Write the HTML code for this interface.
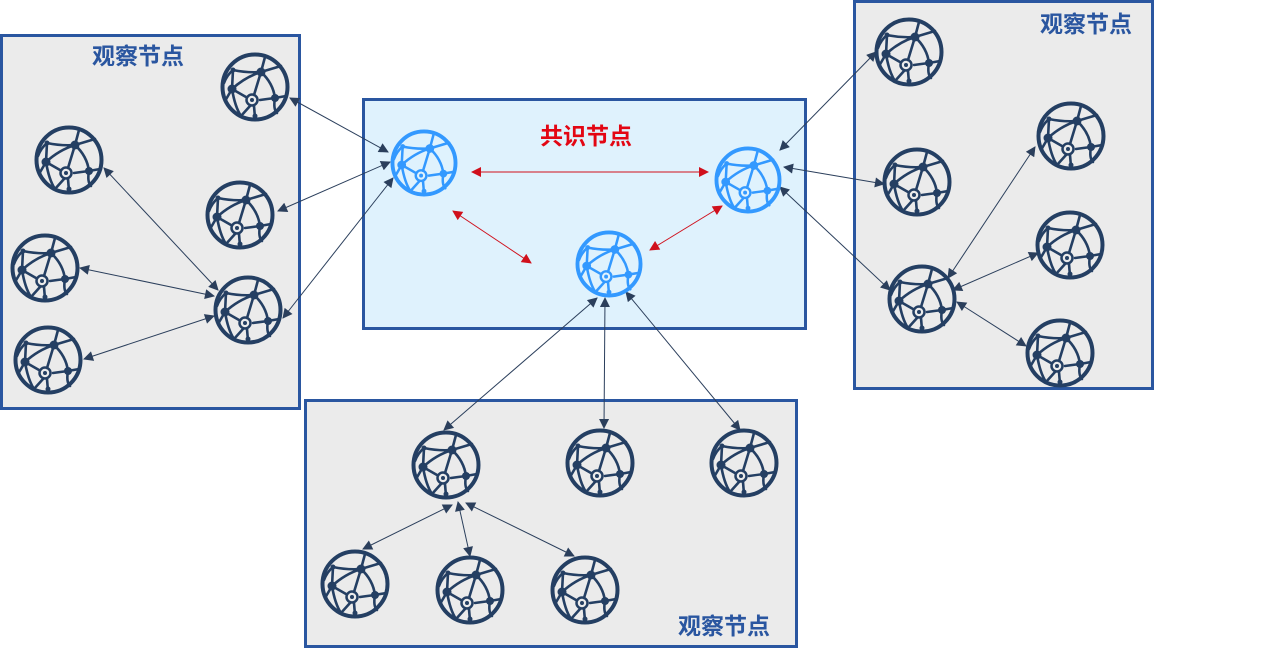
<!DOCTYPE html>
<html><head><meta charset="utf-8"><style>
body{margin:0;background:#fff;width:1284px;height:653px;overflow:hidden}
svg{display:block}
text{font-family:"Liberation Sans","Noto Sans CJK SC",sans-serif;font-weight:bold;font-size:23px}
</style></head><body>
<svg width="1284" height="653" viewBox="0 0 1284 653">
<defs>
<g id="g">
<circle r="32.5" fill="none" stroke-width="4"/>
<g fill="none" stroke-width="2.6" stroke-linecap="round">
<path d="M-22,-17 L-23,2 L-30,14"/>
<path d="M-22,-17 Q-8,-14 6,-15 L26,-21"/>
<path d="M6,-15 L10,-30"/>
<path d="M-23,2 Q-10,-10 6,-15"/>
<path d="M-23,2 L-9,10"/>
<path d="M6,-15 L-1,8"/>
<path d="M-31,-4 Q-28,-12 -22,-17"/>
<path d="M6,-15 Q18,-4 20,11"/>
<path d="M20,11 L31,9"/>
<path d="M20,11 Q18,22 22,26"/>
<path d="M-5,19 L-14,29"/>
<path d="M-1,19 L0,31"/>
<path d="M5,13 Q12,12 20,11"/>
<path d="M-23,2 Q-20,20 -14,29"/>
</g>
<circle cx="-3" cy="13" r="5.5" fill="none" stroke-width="2.5"/>
<circle cx="-3" cy="13" r="2" stroke="none"/>
<circle cx="-23" cy="2" r="4.5" stroke="none"/>
<circle cx="6" cy="-15" r="4.5" stroke="none"/>
<circle cx="20" cy="11" r="4" stroke="none"/>
<circle cx="-22" cy="-17" r="2.5" stroke="none"/>
<circle cx="0" cy="29" r="2.5" stroke="none"/>
</g>
<marker id="ad" viewBox="0 0 10 10" refX="9" refY="5" markerWidth="12" markerHeight="10" markerUnits="userSpaceOnUse" orient="auto-start-reverse"><path d="M0,0L10,5L0,10z" fill="#2b3f5c"/></marker>
<marker id="ar" viewBox="0 0 10 10" refX="9" refY="5" markerWidth="12" markerHeight="10" markerUnits="userSpaceOnUse" orient="auto-start-reverse"><path d="M0,0L10,5L0,10z" fill="#d0101c"/></marker>
</defs>
<g stroke="#2a56a0" stroke-width="3">
<rect x="1.5" y="35.5" width="298" height="373" fill="#ebebeb"/>
<rect x="363.5" y="99.5" width="442" height="229" fill="#dff2fd"/>
<rect x="854.5" y="1.5" width="298" height="387" fill="#ebebeb"/>
<rect x="305.5" y="400.5" width="491" height="246" fill="#ebebeb"/>
</g>
<text x="92" y="64" fill="#2a56a0">观察节点</text>
<text x="1040" y="32" fill="#2a56a0">观察节点</text>
<text x="678" y="634" fill="#2a56a0">观察节点</text>
<text x="540" y="144" fill="#e30613">共识节点</text>
<g stroke="#2b3f5c" stroke-width="1" marker-start="url(#ad)" marker-end="url(#ad)">
<line x1="290" y1="98" x2="388" y2="152"/>
<line x1="278" y1="211" x2="390" y2="162"/>
<line x1="283" y1="318" x2="393" y2="178"/>
<line x1="104" y1="168" x2="218" y2="290"/>
<line x1="80" y1="268" x2="214" y2="296"/>
<line x1="84" y1="359" x2="214" y2="316"/>
<line x1="876" y1="52" x2="780" y2="150"/>
<line x1="784" y1="167" x2="884" y2="184"/>
<line x1="780" y1="187" x2="890" y2="290"/>
<line x1="948" y1="278" x2="1035" y2="147"/>
<line x1="953" y1="290" x2="1038" y2="253"/>
<line x1="957" y1="302" x2="1026" y2="346"/>
<line x1="597" y1="298" x2="444" y2="430"/>
<line x1="605" y1="298" x2="604" y2="428"/>
<line x1="626" y1="292" x2="740" y2="430"/>
<line x1="452" y1="505" x2="363" y2="549"/>
<line x1="458" y1="502" x2="470" y2="556"/>
<line x1="466" y1="503" x2="574" y2="556"/>
</g>
<g stroke="#d0101c" stroke-width="1" marker-start="url(#ar)" marker-end="url(#ar)">
<line x1="472" y1="172" x2="708" y2="172"/>
<line x1="453" y1="211" x2="531" y2="263"/>
<line x1="650" y1="250" x2="722" y2="206"/>
</g>
<g stroke="#243f63" fill="#243f63">
<use href="#g" x="255" y="87"/><use href="#g" x="69" y="160"/><use href="#g" x="240" y="215"/>
<use href="#g" x="45" y="268"/><use href="#g" x="248" y="310"/><use href="#g" x="48" y="360"/>
<use href="#g" x="909" y="52"/><use href="#g" x="1071" y="136"/><use href="#g" x="917" y="182"/>
<use href="#g" x="1070" y="245"/><use href="#g" x="922" y="299"/><use href="#g" x="1060" y="353"/>
<use href="#g" x="446" y="465"/><use href="#g" x="600" y="463"/><use href="#g" x="744" y="463"/>
<use href="#g" x="355" y="584"/><use href="#g" x="470" y="590"/><use href="#g" x="585" y="590"/>
</g>
<g stroke="#3399ff" fill="#3399ff">
<use href="#g" transform="translate(424,163) scale(0.97)"/>
<use href="#g" transform="translate(748,180) scale(0.97)"/>
<use href="#g" transform="translate(609,264) scale(0.97)"/>
</g>
</svg>
</body></html>
